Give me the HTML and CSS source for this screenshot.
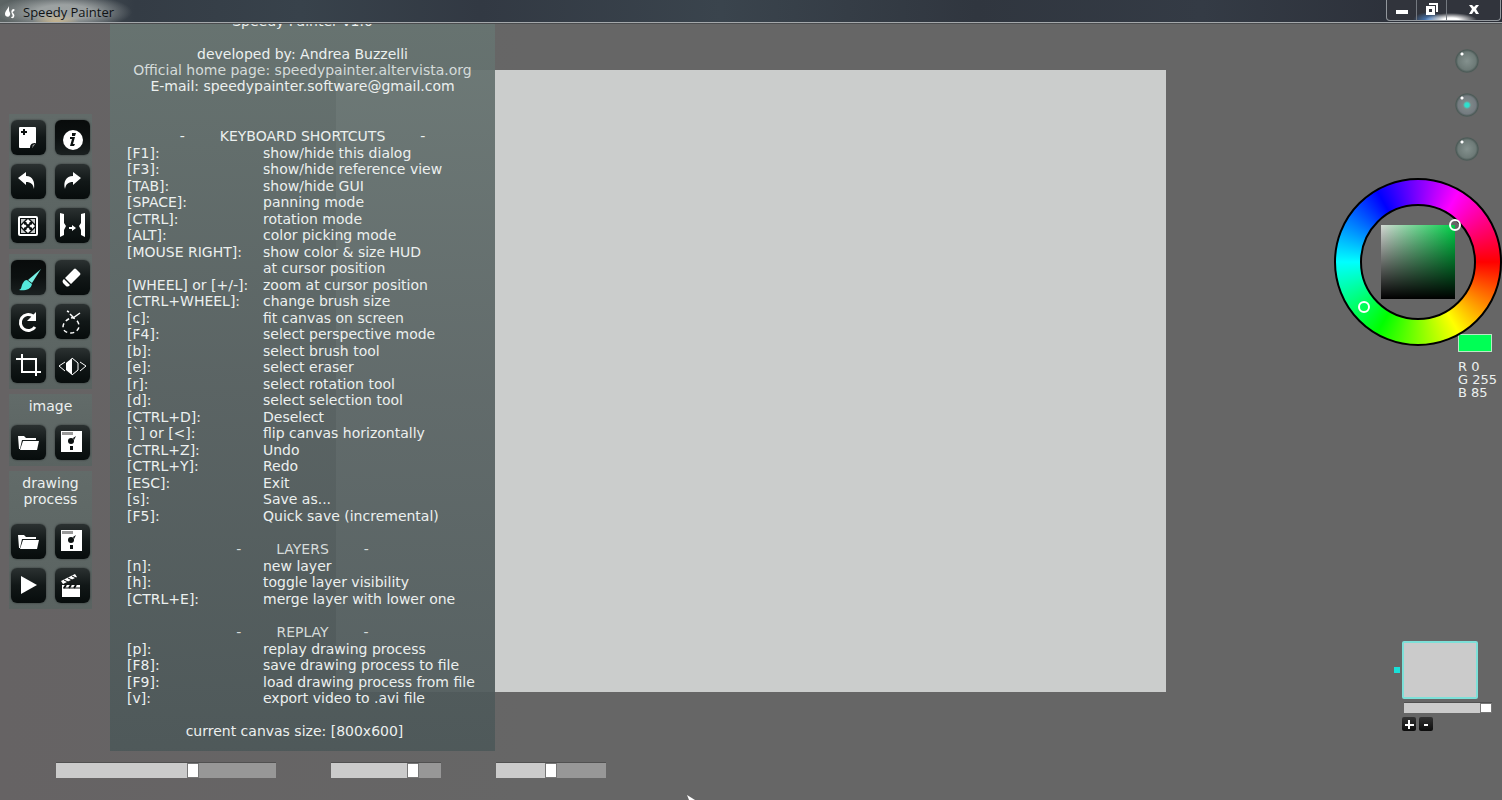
FILE: index.html
```html
<!DOCTYPE html>
<html lang="en">
  <head>
    <meta charset="utf-8" />
    <title>Speedy Painter</title>
    <link rel="stylesheet" href="styles.css">
  </head>
  <body>
    <header class="titlebar">
      <svg class="logo" viewBox="0 0 12 14"><path d="M5 1C4 4 1 6 1 9c0 3 4 4 5 1 1-2-1-3-1-5zM9 4c2 0 2 1 1 2s-2 1-1 2 2 2 1 4-3 1-3 0c2 0 2-1 1-3s-1-4 1-5z"/></svg>
      <h1>Speedy Painter</h1>
      <div class="window-buttons">
        <button aria-label="Minimize"><svg viewBox="0 0 12 12"><path d="M0 7h12v4H0z"/></svg></button>
        <button aria-label="Restore"><svg viewBox="0 0 12 12"><path d="M3 0h9v9h-2V2H3z"/><path d="M0 3h9v9H0zM3 6v3h3V6z" fill-rule="evenodd"/></svg></button>
        <button class="close" aria-label="Close"><svg viewBox="0 0 12 12"><path d="M1 2h3l2 2 2-2h3L8 6l3 5H8L6 8l-2 3H1l3-5z"/></svg></button>
      </div>
    </header>

    <main class="workspace">
      <div class="canvas"></div>

      <nav class="toolbar">
        <div class="tool-group">
          <button aria-label="New"><svg viewBox="0 0 35 35"><path d="M9 7h15q1 0 1 1v15l-4 5H9q-1 0-1-1V8q0-1 1-1z"/><path d="M19 28c0-4 2-5 6-5l-4 5z" fill="#0b1010"/><path d="M21 27l1-2 2-1z"/><path d="M13 9v6M10 12h6" stroke="#0b1010" stroke-width="2"/></svg></button>
          <button class="active" aria-label="Info"><svg viewBox="0 0 35 35"><circle cx="18" cy="20" r="10"/><path d="M17 13h4l-1 3h-3zM15 17h5l-2 7h2l-1 2h-4l2-7h-2z" fill="#0b1010"/></svg></button>
          <button aria-label="Undo"><svg viewBox="0 0 35 35"><path d="M7 14l8-6v4c7 0 9 6 8 13-1-5-3-7-8-7v3z"/></svg></button>
          <button aria-label="Redo"><svg viewBox="0 0 35 35"><path d="M26 14l-8-6v4c-7 0-10 6-8 13 1-5 3-7 8-7v3z"/></svg></button>
          <button aria-label="Fit canvas"><svg viewBox="0 0 35 35"><rect x="7" y="8" width="20" height="20" rx="2"/><rect x="9" y="10" width="16" height="16" fill="#0b1010"/><path d="M17 11l3 3h-2l3 3v-2l3 3-3 3v-2l-3 3h2l-3 3-3-3h2l-3-3v2l-3-3 3-3v2l3-3h-2z"/><path d="M10 11h5l-5 5zM24 11v5l-5-5zM10 25v-5l5 5zM24 25h-5l5-5z" fill="#c9cccc"/><path d="M14 15l6 6M20 15l-6 6" stroke="#0b1010" stroke-width="2"/></svg></button>
          <button aria-label="Perspective"><svg viewBox="0 0 35 35"><path d="M5 5l4 1v9l2 3-2 4v5l-4 2zM30 5l-4 1v9l-2 3 2 4v5l4 2z"/><path d="M14 19h3v-2l4 3-4 3v-2h-3z"/></svg></button>
        </div>

        <div class="tool-group">
          <button class="active" aria-label="Brush"><svg viewBox="0 0 35 35"><path d="M30 9L21 23l-4-3z" fill="#78f0e4"/><path d="M16 20l5 4c-1 6-8 7-13 6 3-1 2-4 4-7 1-2 2-3 4-3z" fill="#54e8dc"/></svg></button>
          <button aria-label="Eraser"><svg viewBox="0 0 35 35"><path d="M19 9q1-1 2 0l4 4q1 1 0 2l-9 9-6-6zM9 19l6 6-1 1q-2 1-3 0l-3-3q-1-2 0-3z"/></svg></button>
          <button aria-label="Rotate"><svg viewBox="0 0 35 35"><path d="M24 23a8 8 0 1 1-2-11" fill="none" stroke="#fff" stroke-width="3"/><path d="M25 8v9h-9z"/></svg></button>
          <button aria-label="Select"><svg viewBox="0 0 35 35"><path d="M16 14c4-1 8 4 8 8s-4 7-8 7-8-2-8-6 4-8 8-9z" fill="none" stroke="#fff" stroke-width="1.5" stroke-dasharray="4 3"/><path d="M12 7l2 1M15 10l4 4M25 9l-7 5" stroke="#fff" stroke-width="1.5"/></svg></button>
          <button aria-label="Crop"><svg viewBox="0 0 35 35"><path d="M5 11h20v17M11 6v18h19" fill="none" stroke="#fff" stroke-width="2"/></svg></button>
          <button aria-label="Flip"><svg viewBox="0 0 35 35"><path d="M17 10v17l-6-5v-7z"/><path d="M17 10l6 5v7l-6 5M10 14l-6 4 6 5M25 14l6 4-6 5" fill="none" stroke="#fff"/></svg></button>
        </div>

        <div class="tool-group labeled">
          <p>image</p>
          <button aria-label="Open image"><svg viewBox="0 0 35 35"><path d="M7 11h6l2 2h10v2H11L9 24H8z"/><path d="M12 16h16l-2 9H9z"/></svg></button>
          <button aria-label="Save image"><svg viewBox="0 0 35 35"><path d="M6 6h21v21H6z"/><path d="M7 7h11v3H7z" fill="#999"/><circle cx="16" cy="16" r="3" fill="#0b1010"/><path d="M15 21h3v4h-3zM18 13l3-2-2 4z" fill="#0b1010"/></svg></button>
        </div>

        <div class="tool-group labeled process">
          <p>drawing process</p>
          <button aria-label="Load process"><svg viewBox="0 0 35 35"><path d="M7 11h6l2 2h10v2H11L9 24H8z"/><path d="M12 16h16l-2 9H9z"/></svg></button>
          <button aria-label="Save process"><svg viewBox="0 0 35 35"><path d="M6 6h21v21H6z"/><path d="M7 7h11v3H7z" fill="#999"/><circle cx="16" cy="16" r="3" fill="#0b1010"/><path d="M15 21h3v4h-3zM18 13l3-2-2 4z" fill="#0b1010"/></svg></button>
          <button aria-label="Replay"><svg viewBox="0 0 35 35"><path d="M10 8l16 9-16 9z"/></svg></button>
          <button aria-label="Export video"><svg viewBox="0 0 35 35"><path d="M7 17h18v12H7z"/><path d="M6 13l14-7 2 3-14 7z"/><path d="M9 12l4 2M13 10l4 2M17 8l4 2M8 20h17" stroke="#0b1010" stroke-width="1"/><path d="M11 17l-2 3M16 17l-2 3M21 17l-2 3" stroke="#0b1010" stroke-width="2"/></svg></button>
        </div>
      </nav>

      <section class="info">
        <p>Speedy Painter v1.0</p>
        <p class="credits">developed by: Andrea Buzzelli<br><span class="dim">Official home page: speedypainter.altervista.org</span><br>E-mail: speedypainter.software@gmail.com</p>

        <h2><span>-</span> KEYBOARD SHORTCUTS <span>-</span></h2>
        <table>
          <tr><th>[F1]:</th><td>show/hide this dialog</td></tr>
          <tr><th>[F3]:</th><td>show/hide reference view</td></tr>
          <tr><th>[TAB]:</th><td>show/hide GUI</td></tr>
          <tr><th>[SPACE]:</th><td>panning mode</td></tr>
          <tr><th>[CTRL]:</th><td>rotation mode</td></tr>
          <tr><th>[ALT]:</th><td>color picking mode</td></tr>
          <tr><th>[MOUSE RIGHT]:</th><td>show color &amp; size HUD</td></tr>
          <tr><th></th><td>at cursor position</td></tr>
          <tr><th>[WHEEL] or [+/-]:</th><td>zoom at cursor position</td></tr>
          <tr><th>[CTRL+WHEEL]:</th><td>change brush size</td></tr>
          <tr><th>[c]:</th><td>fit canvas on screen</td></tr>
          <tr><th>[F4]:</th><td>select perspective mode</td></tr>
          <tr><th>[b]:</th><td>select brush tool</td></tr>
          <tr><th>[e]:</th><td>select eraser</td></tr>
          <tr><th>[r]:</th><td>select rotation tool</td></tr>
          <tr><th>[d]:</th><td>select selection tool</td></tr>
          <tr><th>[CTRL+D]:</th><td>Deselect</td></tr>
          <tr><th>[`] or [&lt;]:</th><td>flip canvas horizontally</td></tr>
          <tr><th>[CTRL+Z]:</th><td>Undo</td></tr>
          <tr><th>[CTRL+Y]:</th><td>Redo</td></tr>
          <tr><th>[ESC]:</th><td>Exit</td></tr>
          <tr><th>[s]:</th><td>Save as...</td></tr>
          <tr><th>[F5]:</th><td>Quick save (incremental)</td></tr>
        </table>

        <h2 class="dim"><span>-</span> LAYERS <span>-</span></h2>
        <table>
          <tr><th>[n]:</th><td>new layer</td></tr>
          <tr><th>[h]:</th><td>toggle layer visibility</td></tr>
          <tr><th>[CTRL+E]:</th><td>merge layer with lower one</td></tr>
        </table>

        <h2 class="dim"><span>-</span> REPLAY <span>-</span></h2>
        <table>
          <tr><th>[p]:</th><td>replay drawing process</td></tr>
          <tr><th>[F8]:</th><td>save drawing process to file</td></tr>
          <tr><th>[F9]:</th><td>load drawing process from file</td></tr>
          <tr><th>[v]:</th><td>export video to .avi file</td></tr>
        </table>

        <p class="size">current canvas size: [800x600]</p>
      </section>

      <aside class="sidebar">
        <div class="orbs">
          <button aria-label="View 1"></button>
          <button class="on" aria-label="View 2"></button>
          <button aria-label="View 3"></button>
        </div>

        <div class="wheel">
          <div class="wheel-inner">
            <div class="shade"><i class="handle"></i></div>
          </div>
          <i class="handle hue"></i>
        </div>

        <div class="color">
          <div class="swatch"></div>
          <p>R 0<br>G 255<br>B 85</p>
        </div>

        <div class="layers">
          <div class="layer"></div>
          <input type="range" class="slider opacity" aria-label="Layer opacity" value="100" style="--value:100%">
          <div class="layer-buttons">
            <button aria-label="Add layer"><svg viewBox="0 0 14 14"><path d="M7 3v9M3 8h9" stroke="#fff" stroke-width="2"/></svg></button>
            <button aria-label="Remove layer"><svg viewBox="0 0 14 14"><path d="M5 8h4" stroke="#fff" stroke-width="2"/></svg></button>
          </div>
        </div>
      </aside>

      <footer class="sliders">
        <input type="range" class="slider wide" aria-label="Brush size" value="63" style="--value:63%">
        <input type="range" class="slider" aria-label="Brush opacity" value="78" style="--value:78%">
        <input type="range" class="slider" aria-label="Brush smoothing" value="50" style="--value:50%">
      </footer>

      <svg class="cursor" viewBox="0 0 8 5"><path d="M0 0l8 5H2z"/></svg>
    </main>
  </body>
</html>
```
FILE: styles.css
```css
* {
  box-sizing:border-box;
}

body {
  margin:0;
  min-height:100vh;
  display:flex;
  flex-direction:column;
  overflow:hidden;
  background-color:#666;
  color:#ecf0ef;
  font-family:"DejaVu Sans", Verdana, sans-serif;
  font-size:14px;
  line-height:16px;
}

h1, h2, p {
  margin:0;
  font-weight:normal;
}

button {
  padding:0;
  border:0;
  background:none;
}

svg {
  display:block;
  fill:#fff;
}

/* title bar */

.titlebar {
  height:24px;
  flex:none;
  display:flex;
  align-items:center;
  gap:7px;
  padding-left:4px;
  border-bottom:1px solid #4a4c4e;
  box-shadow:inset 0 -1px #a4a8ab;
  background:
    radial-gradient(ellipse 24px 12px at 56px 24px, rgba(240,205,140,.7), transparent),
    radial-gradient(ellipse 68px 18px at 64px 12px, rgba(165,170,170,.9) 40%, transparent),
    linear-gradient(90deg, #5c6464, #343c45 9%, #38424b 20%, #323943 32%, #3a444d 48%, #30363f 65%, #343b45 80%, #292c35);
}

.logo {
  width:12px;
  height:14px;
}

h1 {
  color:#101315;
  font-family:"Open Sans", "Segoe UI", sans-serif;
  font-size:13px;
}

.window-buttons {
  display:flex;
  align-self:flex-start;
  height:21px;
  margin-left:auto;
  margin-right:1px;
  border:1px solid #92979c;
  border-top:0;
  border-radius:0 0 4px 4px;
  background:
    radial-gradient(ellipse 26px 7px at 64px 20px, #fff 30%, transparent),
    radial-gradient(ellipse 16px 8px at 42px 20px, #4d86cc, transparent),
    #31343c;
}

.window-buttons button {
  width:30px;
  display:flex;
  justify-content:center;
  align-items:center;
  padding-bottom:3px;
  border-right:1px solid #747980;
}

.window-buttons .close {
  width:53px;
  border:0;
}

.window-buttons svg {
  width:12px;
  height:12px;
}

/* workspace */

.workspace {
  flex:1;
  position:relative;
  display:grid;
  grid-template-columns:110px 1fr 168px;
  grid-template-rows:1fr auto;
  background:linear-gradient(90deg, #666364, #666 35%);
}

.canvas {
  grid-area:1 / 1 / 3 / 4;
  justify-self:center;
  height:calc(100vh - 178px);
  aspect-ratio:4 / 3;
  margin-top:46px;
  background-color:#cbcdcc;
}

/* toolbar */

.toolbar {
  grid-area:1 / 1;
  display:flex;
  flex-direction:column;
  align-items:flex-start;
  gap:5px;
  padding:90px 0 0 9px;
}

.tool-group {
  display:grid;
  grid-template-columns:35px 35px;
  gap:9px;
  padding:6px 2px;
  background:linear-gradient(#626b69, #5a6361);
}

.tool-group button {
  width:35px;
  height:35px;
  border-radius:6px;
  background:linear-gradient(#2b3131, #111717 50%, #070c0c);
  box-shadow:0 0 2px #2a3030;
}

.tool-group .active {
  background:linear-gradient(#080b0b, #0c1010 50%, #1a2020);
}

.tool-group svg {
  width:35px;
  height:35px;
}

.labeled {
  padding-top:4px;
}

.labeled p {
  grid-column:1 / 3;
  padding-bottom:2px;
  text-align:center;
}

.process p {
  padding-bottom:8px;
}

/* help dialog */

.info {
  grid-area:1 / 2;
  z-index:1;
  width:385px;
  height:calc(100vh - 73px);
  display:flex;
  flex-direction:column;
  justify-content:flex-end;
  overflow:hidden;
  padding:0 17px 12px;
  background:linear-gradient(rgba(103,116,113,.93), rgba(90,100,100,.93) 50%, rgba(77,88,89,.93));
}

.info p {
  text-align:center;
}

.info .credits {
  margin:17px 0;
}

.dim {
  color:#d5dbda;
}

.info h2 {
  display:flex;
  justify-content:center;
  gap:35px;
  margin-top:17px;
  font-size:14px;
}

.info table {
  border-collapse:collapse;
}

.info th,
.info td {
  height:16px;
  padding:0;
  font-weight:normal;
  text-align:left;
  white-space:nowrap;
}

.info tr:nth-child(odd) > * {
  height:17px;
}

.info th {
  width:136px;
}

.info .size {
  margin-top:17px;
  padding-right:16px;
}

/* colour and layers */

.sidebar {
  grid-area:1 / 3 / 3 / 4;
  display:flex;
  flex-direction:column;
  padding:25px 0 69px;
}

.orbs {
  display:flex;
  flex-direction:column;
  align-self:flex-end;
  gap:20px;
  margin-right:23px;
}

.orbs button {
  width:24px;
  height:24px;
  border-radius:50%;
  background:
    radial-gradient(circle at 7px 5px, #fff 1px, transparent 2px),
    radial-gradient(circle closest-side, #84918e, #6d7a77 75%, #4c5a57 92%, #5d6361);
}

.orbs .on {
  background:
    radial-gradient(circle at 7px 5px, #fff 1px, transparent 2px),
    radial-gradient(circle, #2fe0cd 2px, transparent 4px),
    radial-gradient(circle closest-side, #84918e, #747b80 75%, #4c5a57 92%, #5d6361);
}

.wheel {
  position:relative;
  width:168px;
  height:168px;
  display:grid;
  place-items:center;
  margin-top:17px;
  border:2px solid #000;
  border-radius:50%;
  background:conic-gradient(from 90deg, #f00, #ff0, #0f0, #0ff, #00f, #f0f, #f00);
}

.wheel-inner {
  width:116px;
  height:116px;
  display:grid;
  place-items:center;
  border:2px solid #000;
  border-radius:50%;
  background:#666;
}

.shade {
  position:relative;
  width:74px;
  height:74px;
  background:linear-gradient(transparent, #000), linear-gradient(90deg, #d4d8d4, #00d048);
}

.handle {
  position:absolute;
  top:-6px;
  right:-6px;
  width:12px;
  height:12px;
  border:2px solid #fff;
  border-radius:50%;
}

.hue {
  top:121px;
  left:22px;
}

.color {
  align-self:flex-end;
  width:44px;
  margin-top:-12px;
  font-size:13px;
  line-height:13px;
}

.swatch {
  width:34px;
  height:18px;
  margin-bottom:8px;
  border:1px solid #b9e8c6;
  background-color:#00ff55;
}

.layers {
  position:relative;
  align-self:flex-end;
  width:100px;
  margin-top:auto;
}

.layer {
  width:76px;
  height:58px;
  border:2px solid #7de0d8;
  border-radius:2px;
  background-color:#cbcbcb;
}

.layers::before {
  content:"";
  position:absolute;
  top:26px;
  left:-8px;
  width:6px;
  height:6px;
  background-color:#19e0d8;
}

.layer-buttons {
  display:flex;
  gap:3px;
  margin-top:4px;
}

.layer-buttons button {
  width:14px;
  height:14px;
  border-radius:2px;
  background:linear-gradient(#333, #0c0c0c);
}

/* sliders */

.sliders {
  grid-area:2 / 1 / 3 / 3;
  display:flex;
  gap:55px;
  padding:12px 0 22px 56px;
}

.slider {
  display:block;
  appearance:none;
  width:110px;
  height:15px;
  margin:0;
  background:linear-gradient(#cbcbcb, #cbcbcb) 0 0 / var(--value) 100% no-repeat #979797;
  box-shadow:0 -1px #505050;
}

.slider.wide {
  width:220px;
}

.slider::-webkit-slider-thumb {
  appearance:none;
  width:12px;
  height:15px;
  border:1px solid #777;
  background-color:#fff;
}

.slider.opacity {
  width:88px;
  height:10px;
  margin:4px 0 0 2px;
}

.opacity::-webkit-slider-thumb {
  height:10px;
}

.cursor {
  position:absolute;
  bottom:0;
  left:687px;
  width:8px;
  height:5px;
}
```
